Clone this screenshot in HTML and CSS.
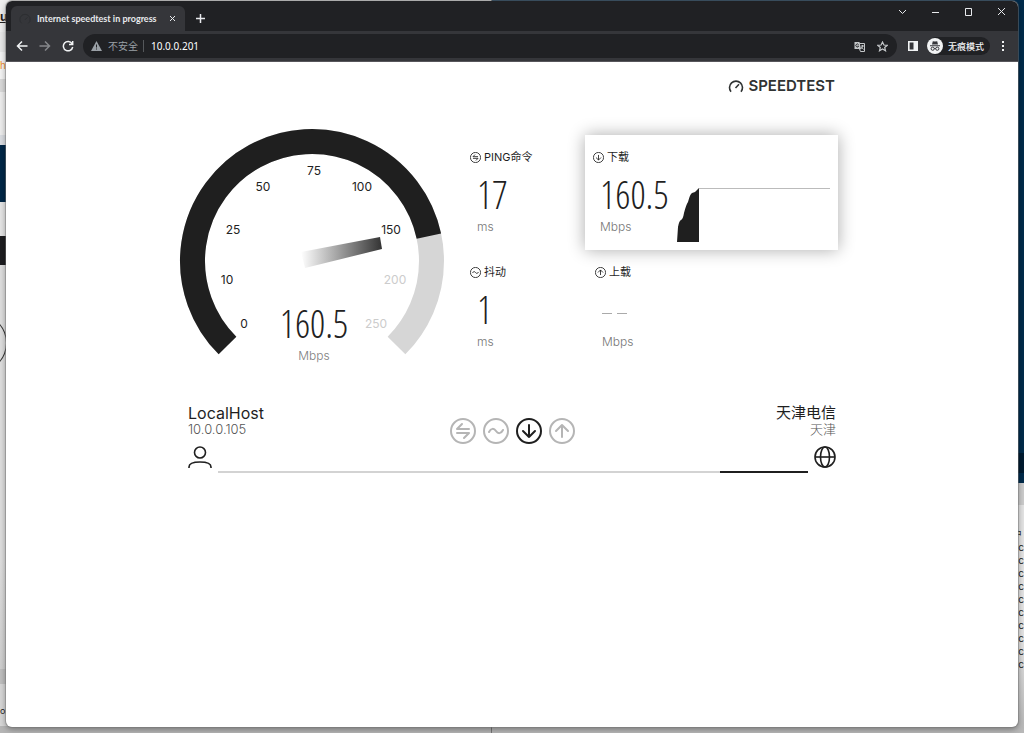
FILE: index.html
```
<!DOCTYPE html>
<html lang="zh-CN">
<head>
<meta charset="utf-8">
<meta name="viewport" content="width=device-width, initial-scale=1">
<title>Internet speedtest in progress</title>
<link rel="stylesheet" href="styles.css">
</head>
<body>
<svg class="defs" width="0" height="0" aria-hidden="true">
  <symbol id="i-ping" viewBox="0 0 26 26"><circle cx="13" cy="13" r="12"/><path d="M19 11H7l5-5M7 15h12l-5 5"/></symbol>
  <symbol id="i-jitter" viewBox="0 0 26 26"><circle cx="13" cy="13" r="12"/><path d="M6 14c2-4 5-4 7-1s5 3 7-1"/></symbol>
  <symbol id="i-down" viewBox="0 0 26 26"><circle cx="13" cy="13" r="12"/><path d="M13 7v12M7 13l6 6 6-6"/></symbol>
  <symbol id="i-up" viewBox="0 0 26 26"><circle cx="13" cy="13" r="12"/><path d="M13 19V7M7 13l6-6 6 6"/></symbol>
</svg>
<div class="desktop">
  <div class="backdrop" aria-hidden="true">
    <div class="back-left">
      <span class="frag frag-u">u</span><span class="frag frag-h">h</span>
      <span class="ring"></span><span class="frag frag-or">or</span>
    </div>
    <div class="back-right">
      <div class="navy"></div>
      <div class="listing">户<br>oc<br>oc<br>oc<br>oc<br>oc<br>oc<br>oc<br>oc<br>oc<br>oc</div>
    </div>
  </div>

  <div class="window">
    <header class="tabstrip">
      <div class="tab">
        <svg class="favicon" viewBox="0 0 14 14"><path d="M3 12a6 6 0 1 1 8 0M7 8l3-3"/></svg>
        <span class="tab-title">Internet speedtest in progress</span>
        <button class="plain" aria-label="Close tab"><svg width="7" height="7" viewBox="0 0 7 7"><path d="M1 1l5 5M6 1L1 6"/></svg></button>
      </div>
      <button class="plain new-tab" aria-label="New tab"><svg width="9" height="9" viewBox="0 0 9 9"><path d="M4.500 0v9M0 4.500h9" stroke-width="1.500"/></svg></button>
      <div class="controls">
        <button class="plain" aria-label="Search tabs"><svg width="9" height="9" viewBox="0 0 9 9"><path d="M1 3l3.500 3.500L8 3"/></svg></button>
        <button class="plain" aria-label="Minimize"><svg width="9" height="9" viewBox="0 0 9 9"><path d="M1 5.500h7"/></svg></button>
        <button class="plain" aria-label="Maximize"><svg width="9" height="9" viewBox="0 0 9 9"><path d="M1.500 1.500h6v7h-6z"/></svg></button>
        <button class="plain" aria-label="Close"><svg width="9" height="9" viewBox="0 0 9 9"><path d="M1 1l7 7M8 1L1 8"/></svg></button>
      </div>
    </header>
    <nav class="toolbar">
      <button class="plain" aria-label="Back"><svg width="12" height="12" viewBox="0 0 12 12"><path d="M11.500 6H1.500M6 1.500L1.500 6 6 10.500" stroke-width="1.500"/></svg></button>
      <button class="plain dim" aria-label="Forward"><svg width="12" height="12" viewBox="0 0 12 12"><path d="M.5 6h10M6 1.500L10.500 6 6 10.500" stroke-width="1.500"/></svg></button>
      <button class="plain" aria-label="Reload"><svg width="12" height="12" viewBox="0 0 12 12"><path d="M10 3.500A4.700 4.700 0 1 0 10.700 7M10.700 1v3.500H7" stroke-width="1.500"/></svg></button>
      <div class="omnibox">
        <svg class="warn" width="11" height="10" viewBox="0 0 11 10"><path d="M5.500 0L11 10H0z"/><path class="mark" d="M5 3.500h1v3H5zM5 7.500h1v1H5z"/></svg>
        <span class="insecure">不安全</span>
        <input class="url" type="text" value="10.0.0.201" aria-label="Address">
        <button class="plain" aria-label="Translate"><svg width="11" height="11" viewBox="0 0 11 11"><path class="fill" d="M.5 1h5l1.500 7h-6.500z"/><path d="M5.500 2.500h5v8h-4l-1-2.500M7 5h3M8.500 4v1q0 2-2 3M7.500 6l2 2.500"/><path class="cut" d="M4.500 3.500a1.500 1.500 0 1 0 .2 1.700h-1.200"/></svg></button>
        <button class="plain" aria-label="Bookmark"><svg width="11" height="11" viewBox="0 0 11 11"><path d="M5.500 1l1.400 3 3.300.3-2.500 2.200.8 3.300-3-1.800-3 1.800.8-3.300L.8 4.300 4.100 4z" stroke-width="1.200"/></svg></button>
      </div>
      <button class="plain" aria-label="Side panel"><svg width="10" height="10" viewBox="0 0 10 10"><path d="M.8.8h8.400v8.400H.8z" stroke-width="1.600"/><path class="fill" d="M5.500 0H10v10H5.500z"/></svg></button>
      <button class="plain profile"><svg width="16" height="16" viewBox="0 0 16 16"><circle class="disc" cx="8" cy="8" r="8"/><path class="hat" d="M3 7.200h10v1H3zM5 6.500l.8-3.300L8 3.600l2.200-.4.800 3.300z"/><g class="specs"><circle cx="5.700" cy="10.700" r="1.600"/><circle cx="10.300" cy="10.700" r="1.600"/><path d="M7.300 10.500h1.400"/></g></svg><span>无痕模式</span></button>
      <button class="plain" aria-label="Menu"><svg width="4" height="10" viewBox="0 0 4 10"><path class="fill" d="M1 0h2v2H1zM1 4h2v2H1zM1 8h2v2H1z"/></svg></button>
    </nav>

    <main class="page">
      <a class="brand" href="#"><svg width="16" height="14" viewBox="0 0 16 14"><path d="M3 12.800a6.500 6.500 0 1 1 10 0M7.500 9L11 5.300"/></svg><span>SPEEDTEST</span></a>

      <section class="stage">
        <svg class="gauge" viewBox="0 0 264 236" role="img" aria-label="160.5 Mbps">
          <defs><linearGradient id="needle"><stop offset="0" stop-color="#fff"/><stop offset="1" stop-color="#333"/></linearGradient></defs>
          <path class="track" d="M47.500 216.500A119.500 119.500 0 1 1 216.500 216.500"/>
          <path class="value" d="M47.500 216.500A119.500 119.500 0 1 1 248.900 107.200"/>
          <path fill="url(#needle)" d="M121 123L200 108l2 12-77 19z"/>
          <g class="ticks">
            <text x="64" y="199">0</text><text x="47" y="155">10</text><text x="53" y="105">25</text><text x="83" y="62">50</text><text x="134" y="46">75</text><text x="182" y="62">100</text><text x="211" y="105">150</text>
            <text class="off" x="215" y="155">200</text><text class="off" x="196" y="199">250</text>
          </g>
          <text class="reading" x="134" y="209">160.5</text>
          <text class="gauge-unit" x="134" y="231">Mbps</text>
        </svg>

        <div class="metrics">
          <article class="metric">
            <h2><svg class="mini"><use href="#i-ping"/></svg>PING命令</h2>
            <p class="number">17</p><p class="unit">ms</p>
          </article>
          <article class="metric card">
            <div class="facts">
              <h2><svg class="mini"><use href="#i-down"/></svg>下载</h2>
              <p class="number">160.5</p><p class="unit">Mbps</p>
            </div>
            <svg class="chart" viewBox="0 0 153 54" preserveAspectRatio="none"><path class="area" d="M0 54L1 39Q2 33 4 32Q6 31 7 25Q9 17 11 14Q13 6 15 5L18 4L22 0V54z"/><path class="level" d="M22 .5h131"/></svg>
          </article>
          <article class="metric">
            <h2><svg class="mini"><use href="#i-jitter"/></svg>抖动</h2>
            <p class="number">1</p><p class="unit">ms</p>
          </article>
          <article class="metric upload">
            <h2><svg class="mini"><use href="#i-up"/></svg>上载</h2>
            <p class="number pending"><i></i><i></i></p><p class="unit">Mbps</p>
          </article>
        </div>
      </section>

      <section class="route">
        <div class="ends">
          <div><p class="name">LocalHost</p><p class="detail">10.0.0.105</p></div>
          <div class="steps">
            <svg><use href="#i-ping"/></svg><svg><use href="#i-jitter"/></svg><svg class="active"><use href="#i-down"/></svg><svg><use href="#i-up"/></svg>
          </div>
          <div class="remote"><p class="name">天津电信</p><p class="detail">天津</p></div>
        </div>
        <div class="link">
          <svg width="24" height="24" viewBox="0 0 24 24"><circle cx="12" cy="6.500" r="5.500"/><path d="M1 22v-1q0-5 11-5t11 5v1"/></svg>
          <div class="bar"><span style="width:15%"></span></div>
          <svg width="22" height="22" viewBox="0 0 22 22"><circle cx="11" cy="11" r="10"/><ellipse cx="11" cy="11" rx="4.500" ry="10"/><path d="M1 11h20"/></svg>
        </div>
      </section>
    </main>
  </div>
</div>
</body>
</html>
```
FILE: styles.css
```
* { box-sizing: border-box; }
body { margin: 0; font-family: Inter, "Noto Sans CJK SC", sans-serif; color: #1f1f1f; }
p, h2 { margin: 0; font-weight: 400; }
svg { display: block; fill: none; stroke: currentColor; flex: none; }
.defs { position: absolute; }
.plain { display: flex; align-items: center; border: 0; padding: 0; background: none; color: inherit; font: inherit; }
.fill { fill: currentColor; stroke: none; }

/* Desktop behind the browser window */
.desktop { position: relative; min-height: 100vh; display: flex; padding: 1px 6px 6px; overflow: hidden; background: #b8b8b8; }
.backdrop { position: absolute; inset: 0; display: flex; }
.back-left {
  position: relative; width: 48%; border-right: 1px solid #777;
  background: linear-gradient(#eee 0 32px, #e8e8e8 32px 52px, #f4f4f4 52px 79px, #d9d9d9 79px 92px, #ededed 92px 135px, #dadde2 135px 145px, #002747 145px 202px, #e5e5e5 202px 236px, #1d1d20 236px 265px, #dedede 265px 560px, #cfcfcf 669px, #bebebe 669px 684px, #d6d6d6 684px 726px, #b5b5b5 726px);
}
.back-right { flex: 1; display: flex; flex-direction: column; background: linear-gradient(#ccc 0 505px, #e4e4e4 505px 640px, #b8b8b8 727px); }
.navy { height: 483px; background: linear-gradient(#002b4b 0 453px, #001b30 453px 473px, #002b4b 473px); }
.listing { margin-top: 45px; align-self: flex-end; font-size: 10px; line-height: 13px; color: #222; }
.frag { position: absolute; left: 0; font-size: 12px; line-height: 14px; }
.frag-u { top: 10px; font-weight: 700; text-decoration: underline; }
.frag-h { top: 58px; color: #ef8c2c; font-size: 10px; }
.frag-or { top: 704px; font-size: 9px; }
.ring { position: absolute; left: -45px; top: 315px; width: 52px; height: 56px; border: 1px solid #333; border-radius: 50%; }

.window { position: relative; flex: 1; display: flex; flex-direction: column; border-radius: 6px; overflow: hidden; background: #fff; box-shadow: 0 0 0 1px #7777, 0 2px 6px #0006; }

/* Browser chrome */
.tabstrip { display: flex; height: 30px; padding-left: 5px; background: #202124; color: #e8eaed; }
.tab { display: flex; align-items: center; width: 174px; margin-top: 5px; padding: 0 9px 0 8px; background: #35363a; border-radius: 6px 6px 0 0; }
.favicon { width: 12px; height: 12px; color: #2b2c30; }
.tab-title { flex: 1; margin-left: 6px; font: 700 9px/14px Lato, sans-serif; white-space: nowrap; }
.new-tab { margin: 4px 0 0 11px; }
.controls { display: flex; gap: 24px; margin: 5px 12px 0 auto; height: 10px; }
.toolbar { display: flex; align-items: center; gap: 11px; height: 31px; padding: 0 13px 0 10px; background: #35363a; border-bottom: 1px solid #57565b; color: #f1f3f4; }
.dim { color: #85878a; }
.omnibox { flex: 1; display: flex; align-items: center; height: 24px; margin: 0 0 0 -2px; padding: 0 9px 0 8px; border-radius: 12px; background: #202124; color: #c4c7c9; }
.omnibox .plain { margin-left: 12px; }
.warn { fill: #9aa0a6; stroke: none; }
.mark { fill: #202124; }
.cut { stroke: #202124; }
.insecure { margin-left: 6px; padding-right: 5px; border-right: 1px solid #55585b; color: #9aa0a6; font-size: 10px; line-height: 12px; }
.url { flex: 1; min-width: 0; margin-left: 7px; padding: 0; border: 0; outline: 0; background: none; color: #fff; font: 10px/14px "Noto Sans", sans-serif; }
.toolbar .profile { gap: 5px; height: 18px; margin-left: -2px; padding-right: 6px; border-radius: 9px; background: #202124; font-size: 9px; font-weight: 500; }
.disc { fill: #f1f3f4; stroke: none; }
.hat { fill: #35363a; stroke: none; }
.specs { stroke: #35363a; }

/* Speed test page */
.page { display: flex; flex-direction: column; width: 100%; max-width: 664px; margin: 0 auto; padding-top: 16px; }
.brand { display: flex; align-items: center; gap: 4px; align-self: flex-end; margin-right: 9px; color: #303333; text-decoration: none; font: 600 15px/16px Inter, sans-serif; }
.brand svg { stroke-width: 1.600; }
.stage { display: flex; align-items: flex-start; gap: 26px; margin-top: 35px; }
.gauge { flex: none; width: 264px; height: 236px; overflow: visible; }
.gauge text { stroke: none; fill: #222; text-anchor: middle; }
.track, .value { stroke: #d6d6d6; stroke-width: 25; }
.value { stroke: #1f1f1f; }
.gauge path[fill] { stroke: none; }
.ticks { font-size: 12px; }
.gauge text.off { fill: #ccc; }
.gauge .reading, .number { font-family: "Open Sans Condensed Light", "Roboto Condensed", Roboto, sans-serif; font-weight: 300; font-size: 38px; }
.gauge .gauge-unit { fill: #808080; font-size: 12px; font-weight: 300; }
.metrics { flex: 1; display: grid; grid-template-columns: 115px 1fr; grid-auto-rows: 115px; margin: 6px 7px 0 0; }
.metric { padding-top: 13px; }
.metric h2 { display: flex; align-items: center; gap: 3px; font-size: 11px; line-height: 18px; white-space: nowrap; }
.mini { width: 11px; height: 11px; stroke-width: 2; }
.number { margin: 8px 0 0 7px; height: 40px; line-height: 40px; }
.unit { margin: 5px 0 0 7px; font-size: 12px; font-weight: 300; line-height: 16px; color: #777; }
.card { display: flex; padding: 13px 8px 8px; background: #fff; box-shadow: 0 0 16px #0005; }
.facts { width: 84px; }
.chart { flex: 1; min-width: 0; height: 54px; align-self: flex-end; }
.area { fill: #1f1f1f; stroke: none; }
.level { stroke: #bbb; }
.upload { padding-left: 10px; }
.pending { display: flex; align-items: center; gap: 5px; padding-top: 8px; }
.pending i { width: 10px; height: 1px; background: #aaa; }

.route { margin: 39px 8px 0; }
.ends { display: grid; grid-template-columns: 1fr auto 1fr; height: 40px; }
.name { font-size: 16px; line-height: 18px; }
.detail { font-size: 13px; font-weight: 300; line-height: 15px; color: #555; }
.remote { text-align: right; }
.remote .name { font-size: 15px; }
.steps { display: flex; gap: 7px; align-self: end; color: #b5b5b5; }
.steps svg { width: 26px; height: 26px; stroke-width: 2; stroke-linecap: round; stroke-linejoin: round; }
.steps .active { color: #1f1f1f; }
.link { display: flex; gap: 6px; height: 29px; padding-top: 2px; }
.link svg { stroke-width: 1.600; }
.bar { flex: 1; display: flex; justify-content: flex-end; align-self: flex-end; height: 2px; background: #d3d3d3; }
.bar span { background: #1f1f1f; }
```
